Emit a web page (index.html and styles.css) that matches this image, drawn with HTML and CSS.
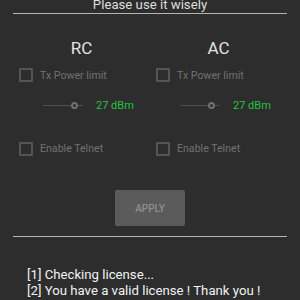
FILE: index.html
```html
<!DOCTYPE html>
<html>
<head>
<meta charset="utf-8">
<link rel="stylesheet" href="styles.css">
</head>
<body>
<div class="page">
  <div class="title">Please use it wisely</div>
  <div class="rule"></div>
  <div class="cols">
    <div class="col">
      <div class="col-title">RC</div>
      <div class="check-row"><span class="box"></span><span class="label">Tx Power limit</span></div>
      <div class="slider-row">
        <div class="slider"><span class="track"></span><span class="thumb"></span><span class="track short"></span></div>
        <span class="value">27 dBm</span>
      </div>
      <div class="check-row telnet"><span class="box"></span><span class="label">Enable Telnet</span></div>
    </div>
    <div class="col">
      <div class="col-title">AC</div>
      <div class="check-row"><span class="box"></span><span class="label">Tx Power limit</span></div>
      <div class="slider-row">
        <div class="slider"><span class="track"></span><span class="thumb"></span><span class="track short"></span></div>
        <span class="value">27 dBm</span>
      </div>
      <div class="check-row telnet"><span class="box"></span><span class="label">Enable Telnet</span></div>
    </div>
  </div>
  <div class="actions"><button class="apply">APPLY</button></div>
  <div class="rule lower"></div>
  <div class="log">
    <div>[1] Checking license...</div>
    <div>[2] You have a valid license ! Thank you !</div>
  </div>
</div>
</body>
</html>
```

FILE: styles.css
```css
html, body {
  margin: 0;
  padding: 0;
  background: #2d2d2d;
  overflow: hidden;
}
.page {
  width: 300px;
  height: 300px;
  font-family: Roboto, "Liberation Sans", sans-serif;
  display: flex;
  flex-direction: column;
}
.title {
  margin-top: -3px;
  height: 15px;
  line-height: 16px;
  font-size: 13.2px;
  color: #dedede;
  text-align: center;
}
.rule {
  margin: 1px 13px 0;
  height: 1px;
  background: #b5b5b5;
}
.cols {
  display: flex;
  padding: 0 13px;
  margin-top: 20px;
}
.col {
  flex: 1;
  display: flex;
  flex-direction: column;
}
.col-title {
  height: 28px;
  line-height: 28px;
  text-align: center;
  font-size: 17px;
  color: #e2e2e2;
}
.check-row {
  height: 26px;
  display: flex;
  align-items: center;
  padding-left: 6px;
  gap: 7px;
}
.check-row.telnet {
  margin-top: 14px;
  height: 25px;
}
.box {
  width: 10px;
  height: 10px;
  border: 2px solid #555555;
  border-radius: 1px;
}
.label {
  font-size: 10.6px;
  color: #727272;
}
.slider-row {
  height: 34px;
  display: flex;
  align-items: center;
  padding-left: 30px;
  gap: 13px;
}
.slider {
  width: 40px;
  display: flex;
  align-items: center;
}
.track {
  width: 28px;
  height: 1px;
  background: #4f4f4f;
}
.track.short {
  width: 5px;
}
.thumb {
  width: 3px;
  height: 3px;
  border: 2px solid #707070;
  border-radius: 50%;
}
.value {
  font-size: 11px;
  color: #22c43f;
}
.actions {
  display: flex;
  justify-content: center;
  margin-top: 29px;
}
.apply {
  width: 70px;
  height: 36px;
  background: #5b5b5b;
  border: none;
  border-radius: 2px;
  color: #8f8f8f;
  font-family: Roboto, "Liberation Sans", sans-serif;
  font-size: 10px;
  font-weight: 500;
  padding: 0;
}
.rule.lower {
  margin-top: 10px;
}
.log {
  margin-top: 30px;
  padding-left: 27px;
  font-size: 13.2px;
  line-height: 16px;
  color: #f2f2f2;
}
```
